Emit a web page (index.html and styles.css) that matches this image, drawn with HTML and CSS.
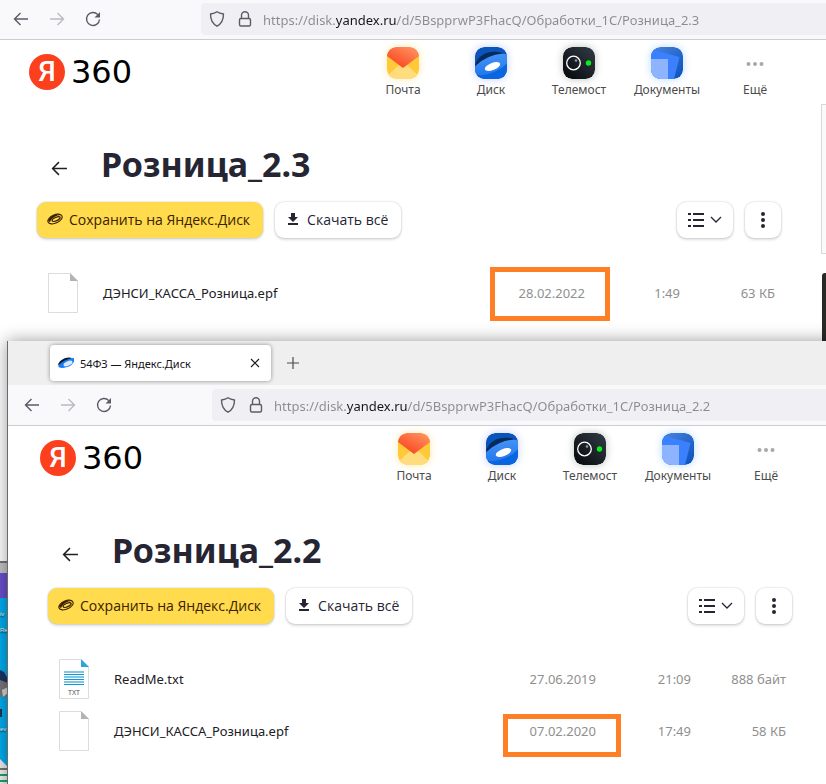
FILE: index.html
```html
<!DOCTYPE html>
<html lang="ru">
<head>
<meta charset="utf-8">
<meta name="viewport" content="width=device-width, initial-scale=1">
<title>Яндекс.Диск</title>
<link rel="stylesheet" href="styles.css">
</head>
<body>
<svg class="defs" aria-hidden="true">
  <defs>
    <linearGradient id="mail-flap" x1="1" y1="0" x2="0.2" y2="1"><stop offset="0" stop-color="#ff9a66"/><stop offset="1" stop-color="#fb3f1c"/></linearGradient>
    <linearGradient id="disk-body" x1="1" y1="0" x2="0" y2="1"><stop offset="0" stop-color="#4a97f8"/><stop offset="1" stop-color="#1c74ea"/></linearGradient>
    <linearGradient id="meet-bg" x1="1" y1="0" x2="0" y2="1"><stop offset="0" stop-color="#323c46"/><stop offset="1" stop-color="#05070a"/></linearGradient>
    <linearGradient id="docs-bg" x1="0" y1="0" x2="1" y2="1"><stop offset="0" stop-color="#4a86dc"/><stop offset="1" stop-color="#0a50bd"/></linearGradient>
    <clipPath id="tile"><rect width="32" height="32" rx="9"/></clipPath>
    <symbol id="i-back" viewBox="0 0 16 16"><path d="M15 8H1.500M7.500 2L1.500 8l6 6" fill="none" stroke="currentColor" stroke-width="1.400"/></symbol>
    <symbol id="i-forward" viewBox="0 0 16 16"><path d="M1 8h13.500M8.500 2l6 6-6 6" fill="none" stroke="currentColor" stroke-width="1.400"/></symbol>
    <symbol id="i-reload" viewBox="0 0 16 16"><path d="M12.800 3.600A6.500 6.500 0 1 0 14.500 8.500" fill="none" stroke="currentColor" stroke-width="1.400"/><path d="M15 1v5.500H9.500z" fill="currentColor"/></symbol>
    <symbol id="i-shield" viewBox="0 0 16 16"><path d="M8 .8C6.300 2 3.800 2.700 1.500 3c0 5 1.500 9.500 6.500 12.200C13 12.500 14.500 8 14.500 3 12.200 2.700 9.700 2 8 .8z" fill="none" stroke="currentColor" stroke-width="1.400" stroke-linejoin="round"/></symbol>
    <symbol id="i-lock" viewBox="0 0 16 16"><rect x="2.500" y="7.500" width="11" height="7.500" rx="1.500" fill="none" stroke="currentColor" stroke-width="1.400"/><path d="M4.500 7.500V4.300a3.500 3.500 0 0 1 7 0v3.200" fill="none" stroke="currentColor" stroke-width="1.400"/></symbol>
    <symbol id="i-mail" viewBox="0 0 32 32"><g clip-path="url(#tile)"><path fill="#ffc938" d="M0 0h32v32H0z"/><path fill="#ffdc7c" d="M0 32V29L12 18h8l12 11v3z"/><path fill="url(#mail-flap)" d="M0 0h32v9L16 21 0 9z"/></g></symbol>
    <symbol id="i-disk" viewBox="0 0 32 32"><g clip-path="url(#tile)"><path fill="#0a55ba" d="M0 0h32v32H0z"/><path fill="#042a5e" d="M0 18C3 8 14 2 28 6L12 16z"/><path fill="#0a66e0" d="M0 24L32 10v22H0z"/><ellipse cx="16.500" cy="17.500" rx="19" ry="8" transform="rotate(-24 16.500 17.500)" fill="url(#disk-body)"/><ellipse cx="17.500" cy="19.500" rx="8.200" ry="3.600" transform="rotate(-22 17.500 19.500)" fill="#fff"/></g></symbol>
    <symbol id="i-meet" viewBox="0 0 32 32"><rect width="32" height="32" rx="9" fill="url(#meet-bg)"/><circle cx="10.500" cy="16" r="6.800" fill="none" stroke="#fff" stroke-width="1.300"/><circle cx="13" cy="13.500" r="1.300" fill="#8c98a4"/><circle cx="25.500" cy="16" r="2.700" fill="#09f018"/></symbol>
    <symbol id="i-docs" viewBox="0 0 32 32"><g clip-path="url(#tile)"><path fill="url(#docs-bg)" d="M0 0h32v32H0z"/><path fill="#3b80ff" d="M0 2l28.500 8L23 32H0z"/><path fill="#8fb4ff" d="M0 12h17v20H0z"/></g></symbol>
    <symbol id="i-dots" viewBox="0 0 32 32"><g fill="#a8a8a8"><circle cx="9.500" cy="17" r="2"/><circle cx="16" cy="17" r="2"/><circle cx="22.500" cy="17" r="2"/></g></symbol>
    <symbol id="i-save" viewBox="0 0 16 16"><g fill="none" stroke="currentColor" transform="rotate(-24 8 8)"><ellipse cx="8" cy="8" rx="7.600" ry="4.200" stroke-width="1.100"/><ellipse cx="9" cy="8.500" rx="4.300" ry="1.700" stroke-width="1.300"/></g><path d="M1 10c2-5 8-8 13-6C9 4 5 7 3 11z" fill="currentColor"/></symbol>
    <symbol id="i-download" viewBox="0 0 12 12"><path d="M4 0h4v4h3L6 9 1 4h3zM1 10h10v2H1z" fill="currentColor"/></symbol>
    <symbol id="i-list" viewBox="0 0 16 16"><path d="M0 1h3v2H0zM5 1h11v2H5zM0 7h3v2H0zM5 7h11v2H5zM0 13h3v2H0zM5 13h11v2H5z" fill="currentColor"/></symbol>
    <symbol id="i-chevron" viewBox="0 0 12 12"><path d="M1 3l5 5 5-5" fill="none" stroke="currentColor" stroke-width="1.300"/></symbol>
    <symbol id="i-more" viewBox="0 0 16 16"><g fill="currentColor"><circle cx="8" cy="2" r="2"/><circle cx="8" cy="8" r="2"/><circle cx="8" cy="14" r="2"/></g></symbol>
    <symbol id="i-file" viewBox="0 0 30 40"><path d="M.5.5H22L29.500 8v31.500H.5z" fill="#fff" stroke="#dcdcdc"/><path d="M22 0l8 8h-8z" fill="#b3b3b3"/></symbol>
    <symbol id="i-text-file" viewBox="0 0 30 40"><path d="M.5.5H22L29.500 8v31.500H.5z" fill="#fff" stroke="#dcdcdc"/><path d="M22 0l8 8h-8z" fill="#2da5dc"/><path d="M5 12h20v2H5zM5 17h20v2H5zM5 22h20v2H5z" fill="#7cc8ec"/><path d="M5 15h20v1H5zM5 20h20v1H5zM5 25h20v1H5z" fill="#0f97d6"/></symbol>
    <symbol id="i-tab" viewBox="0 0 16 16"><path d="M0 10C1 5 9 1 14 3L5 9z" fill="#03162e"/><path d="M0 11C3 7 10 3 16 3c1 3-1 6-4 8-4 2-11 3-12 0z" fill="#1a7cf2"/><ellipse cx="10" cy="8.500" rx="4.800" ry="2.300" transform="rotate(-25 10 8.500)" fill="#d7e9ff"/></symbol>
    <symbol id="i-close" viewBox="0 0 10 10"><path d="M1 1l8 8M9 1L1 9" fill="none" stroke="currentColor" stroke-width="1.100"/></symbol>
    <symbol id="i-plus" viewBox="0 0 12 12"><path d="M6 0v12M0 6h12" fill="none" stroke="currentColor" stroke-width="1.200"/></symbol>
  </defs>
</svg>

<div class="desktop">
  <div class="desktop-edge" aria-hidden="true">
    <div class="edge-frame"></div>
    <div class="edge-banner"></div>
    <div class="edge-label">iv<br>Re</div>
    <svg class="edge-art" viewBox="0 0 8 124"><path d="M0 21l4 2 4 7v10H0z" fill="#1c3566"/><path d="M0 31l8 3v12l-5 3-3-2z" fill="#77777b"/><path d="M2 41l6-3v6l-5 4z" fill="#d5d5d5"/><path d="M0 60h2v8H0z" fill="#20364c"/><path d="M0 110l8 8v6H0z" fill="#eee"/></svg>
    <div class="edge-label edge-label-low">ev</div>
    <div class="edge-sheet"></div>
  </div>

  <section class="window window-back" aria-label="Розница_2.3">
    <div class="toolbar">
      <button class="tool" aria-label="Назад"><svg><use href="#i-back"/></svg></button>
      <button class="tool tool-off" aria-label="Вперёд"><svg><use href="#i-forward"/></svg></button>
      <button class="tool" aria-label="Обновить"><svg><use href="#i-reload"/></svg></button>
      <div class="address">
        <svg><use href="#i-shield"/></svg>
        <svg><use href="#i-lock"/></svg>
        <input class="url" type="text" aria-label="Адрес" value="https://disk.yandex.ru/d/5BspprwP3FhacQ/Обработки_1С/Розница_2.3">
      </div>
    </div>
    <div class="page">
      <header class="header">
        <a class="logo" href="#"><span class="logo-mark">Я</span><span class="logo-name">360</span></a>
        <nav class="services">
          <a href="#"><svg class="glow-mail"><use href="#i-mail"/></svg>Почта</a>
          <a href="#"><svg class="glow-disk"><use href="#i-disk"/></svg>Диск</a>
          <a href="#"><svg class="glow-meet"><use href="#i-meet"/></svg>Телемост</a>
          <a href="#"><svg class="glow-docs"><use href="#i-docs"/></svg>Документы</a>
          <a href="#"><svg><use href="#i-dots"/></svg>Ещё</a>
        </nav>
      </header>
      <main class="content">
        <div class="heading">
          <a class="up" href="#" aria-label="Наверх"><svg><use href="#i-back"/></svg></a>
          <h1>Розница_2.3</h1>
        </div>
        <div class="actions">
          <button class="button primary"><svg><use href="#i-save"/></svg>Сохранить на Яндекс.Диск</button>
          <button class="button download"><svg class="small"><use href="#i-download"/></svg>Скачать всё</button>
          <button class="button view" aria-label="Вид"><svg><use href="#i-list"/></svg><svg class="small"><use href="#i-chevron"/></svg></button>
          <button class="button more" aria-label="Ещё действия"><svg><use href="#i-more"/></svg></button>
        </div>
        <table class="files">
          <tr>
            <td class="icon"><svg><use href="#i-file"/></svg></td>
            <td class="name">ДЭНСИ_КАССА_Розница.epf</td>
            <td class="date">28.02.2022<span class="mark mark-large"></span></td>
            <td class="time">1:49</td>
            <td class="size">63 КБ</td>
          </tr>
        </table>
      </main>
      <aside class="side"><div class="side-card"></div><div class="side-photo"></div></aside>
    </div>
  </section>

  <section class="window window-front" aria-label="Розница_2.2">
    <div class="tabs">
      <div class="tab"><svg><use href="#i-tab"/></svg><span>54ФЗ — Яндекс.Диск</span><button class="close" aria-label="Закрыть вкладку"><svg><use href="#i-close"/></svg></button></div>
      <button class="new-tab" aria-label="Новая вкладка"><svg><use href="#i-plus"/></svg></button>
    </div>
    <div class="toolbar">
      <button class="tool" aria-label="Назад"><svg><use href="#i-back"/></svg></button>
      <button class="tool tool-off" aria-label="Вперёд"><svg><use href="#i-forward"/></svg></button>
      <button class="tool" aria-label="Обновить"><svg><use href="#i-reload"/></svg></button>
      <div class="address">
        <svg><use href="#i-shield"/></svg>
        <svg><use href="#i-lock"/></svg>
        <input class="url" type="text" aria-label="Адрес" value="https://disk.yandex.ru/d/5BspprwP3FhacQ/Обработки_1С/Розница_2.2">
      </div>
    </div>
    <div class="page">
      <header class="header">
        <a class="logo" href="#"><span class="logo-mark">Я</span><span class="logo-name">360</span></a>
        <nav class="services">
          <a href="#"><svg class="glow-mail"><use href="#i-mail"/></svg>Почта</a>
          <a href="#"><svg class="glow-disk"><use href="#i-disk"/></svg>Диск</a>
          <a href="#"><svg class="glow-meet"><use href="#i-meet"/></svg>Телемост</a>
          <a href="#"><svg class="glow-docs"><use href="#i-docs"/></svg>Документы</a>
          <a href="#"><svg><use href="#i-dots"/></svg>Ещё</a>
        </nav>
      </header>
      <main class="content">
        <div class="heading">
          <a class="up" href="#" aria-label="Наверх"><svg><use href="#i-back"/></svg></a>
          <h1>Розница_2.2</h1>
        </div>
        <div class="actions">
          <button class="button primary"><svg><use href="#i-save"/></svg>Сохранить на Яндекс.Диск</button>
          <button class="button download"><svg class="small"><use href="#i-download"/></svg>Скачать всё</button>
          <button class="button view" aria-label="Вид"><svg><use href="#i-list"/></svg><svg class="small"><use href="#i-chevron"/></svg></button>
          <button class="button more" aria-label="Ещё действия"><svg><use href="#i-more"/></svg></button>
        </div>
        <table class="files">
          <tr>
            <td class="icon"><svg><use href="#i-text-file"/></svg><span class="file-type">TXT</span></td>
            <td class="name">ReadMe.txt</td>
            <td class="date">27.06.2019</td>
            <td class="time">21:09</td>
            <td class="size">888 байт</td>
          </tr>
          <tr>
            <td class="icon"><svg><use href="#i-file"/></svg></td>
            <td class="name">ДЭНСИ_КАССА_Розница.epf</td>
            <td class="date">07.02.2020<span class="mark"></span></td>
            <td class="time">17:49</td>
            <td class="size">58 КБ</td>
          </tr>
        </table>
      </main>
    </div>
  </section>
</div>
</body>
</html>
```

FILE: styles.css
```css
* { box-sizing: border-box; }

body {
  margin: 0;
  font-family: "Noto Sans", "Open Sans", sans-serif;
  font-size: 13px;
  color: #21201f;
  background: #fff;
}

.defs { position: absolute; width: 0; height: 0; }
svg { display: block; flex: none; }
a { color: inherit; text-decoration: none; }
button { font: inherit; color: inherit; border: 0; padding: 0; background: none; }

.desktop {
  position: relative;
  min-height: 100vh;
  overflow: hidden;
}

/* Windows placed freely on the desktop */
.window {
  position: absolute;
  background: #fff;
}
.window-back {
  left: -3px;
  top: -1px;
  width: calc(100% + 11px);
  height: 562px;
}
.window-front {
  left: 7px;
  top: 341px;
  width: calc(100% + 12px);
  min-height: 100%;
  border-left: 1px solid #6b6b6b;
  box-shadow: 0 0 16px rgba(0, 0, 0, .4);
}

/* Browser chrome */
.tabs {
  display: flex;
  align-items: center;
  height: 44px;
  padding-left: 42px;
  gap: 16px;
  background: #efefef;
}
.tab {
  display: flex;
  align-items: center;
  gap: 6px;
  width: 221px;
  height: 36px;
  padding: 0 11px 0 8px;
  border-radius: 4px;
  background: #fff;
  box-shadow: 0 0 4px rgba(0, 0, 0, .4);
  font-size: 11px;
  color: #15141a;
}
.tab svg { width: 16px; height: 16px; }
.tab .close { margin-left: auto; }
.tab .close svg { width: 10px; height: 10px; }
.new-tab svg { width: 12px; height: 12px; color: #4a4a52; }

.toolbar {
  display: flex;
  align-items: center;
  height: 41px;
  padding-left: 16px;
  gap: 20px;
  background: #f9f9fb;
  border-bottom: 1px solid #ccccd0;
}
.tool { color: #5b5b66; }
.tool svg { width: 16px; height: 16px; }
.tool-off { color: #bbbbc0; }
.address {
  flex: 1;
  display: flex;
  align-items: center;
  gap: 12px;
  height: 32px;
  margin-left: 80px;
  padding-left: 8px;
  border-radius: 4px;
  background: #f0f0f4;
  color: #5b5b66;
}
.address svg { width: 16px; height: 16px; }
/* The domain part of the address is drawn darker than the rest */
.url {
  flex: 1;
  min-width: 0;
  margin-left: -2px;
  padding: 2px 0 0;
  border: 0;
  outline: 0;
  font: 13px/20px "Noto Sans", "Open Sans", sans-serif;
  color: transparent;
  background: linear-gradient(90deg, #8a8a94 73px, #15141a 73px 134px, #8a8a94 134px);
  background-clip: text;
  -webkit-background-clip: text;
}

/* Disk page */
.header {
  display: flex;
  justify-content: space-between;
  align-items: flex-start;
  padding: 7px 35px 0 32px;
}
.logo {
  display: flex;
  align-items: center;
  gap: 6px;
  margin-top: 7px;
  color: #000;
}
.logo-mark {
  width: 36px;
  height: 36px;
  border-radius: 50%;
  background: #fc3f1d;
  color: #fff;
  font: 500 28px/36px Roboto, sans-serif;
  text-align: center;
}
.logo-name { font: 32px/36px "DejaVu Sans", sans-serif; }
.services { display: flex; }
.services a {
  display: flex;
  flex-direction: column;
  align-items: center;
  width: 88px;
  line-height: 22px;
  font-size: 12px;
  color: #4c4b4b;
}
.services svg { width: 32px; height: 32px; border-radius: 9px; }
.glow-mail { box-shadow: 0 0 8px #ffe9b5; }
.glow-disk { box-shadow: 0 0 8px #c5cfff; }
.glow-meet { box-shadow: 0 0 8px #bcc4bc; }
.glow-docs { box-shadow: 0 0 8px #bcdcff; }

.content { padding: 39px 53px 0 40px; }
.heading {
  display: flex;
  align-items: center;
  gap: 33px;
  padding-left: 14px;
}
.up { margin-top: 8px; }
.up svg { width: 17px; height: 17px; }
h1 {
  margin: 0;
  font-size: 34px;
  line-height: 48px;
  font-weight: 700;
  color: #262533;
}
.actions { display: flex; gap: 12px; margin-top: 14px; }
.button {
  display: flex;
  align-items: center;
  justify-content: center;
  gap: 6px;
  height: 36px;
  padding: 0 13px 2px 10px;
  border-radius: 9px;
  background: #fff;
  box-shadow: 0 0 2px rgba(0, 0, 0, .24), 0 2px 3px rgba(0, 0, 0, .12);
  font-family: "Open Sans", "Noto Sans", sans-serif;
  font-size: 14px;
  font-weight: 500;
  color: #262533;
}
.button svg { width: 16px; height: 16px; }
.button svg.small { width: 12px; height: 12px; }
.primary { background: #ffdb4d; color: #3a2100; }
.download { gap: 8px; padding-left: 12px; }
.view { width: 56px; margin-left: auto; padding: 0; }
.more { width: 36px; padding: 0; }

.files {
  width: 100%;
  margin-top: 29px;
  border-collapse: collapse;
  table-layout: fixed;
  color: #8f8f8f;
}
.files td { position: relative; height: 52px; padding: 0; }
.files .icon { width: 66px; padding-left: 11px; }
.files .icon svg { width: 30px; height: 40px; }
.file-type {
  position: absolute;
  left: 11px;
  bottom: 7px;
  width: 30px;
  font-size: 7px;
  line-height: 10px;
  text-align: center;
  color: #555;
}
.files .name { color: #21201f; }
.files .date { width: 88px; text-align: right; }
.files .time { width: 95px; text-align: right; }
.files .size { width: 101px; padding-right: 6px; text-align: right; }
.mark {
  position: absolute;
  inset: 9px -25px 0 -5px;
  border: 5px solid #ff7f27;
}
.mark-large { inset: 0 -25px -2px -7px; }

/* Right column peeking in at the edge */
.side {
  position: absolute;
  left: calc(100% - 13px);
  top: 105px;
  width: 60px;
}
.side-card { height: 150px; border: 1px solid #d8d8d8; background: #fafafa; }
.side-photo { height: 80px; margin: 19px 0 0 1px; background: #292a26; border-radius: 3px; }

/* Strip of desktop visible beside the front window */
.desktop-edge {
  position: absolute;
  left: 0;
  top: 561px;
  width: 8px;
  height: 223px;
  overflow: hidden;
  background: #00adef;
}
.edge-frame { height: 12px; background: #c4c4c4; border-top: 2px solid #777; }
.edge-banner { height: 25px; background: #6a4fcf; }
.edge-label {
  margin-top: 8px;
  font: 6px/16px "Liberation Sans", sans-serif;
  color: #fff;
  text-shadow: 0 1px 2px #000;
}
.edge-art { position: absolute; left: 0; top: 88px; width: 8px; height: 124px; }
.edge-label-low { position: absolute; top: 152px; }
.edge-sheet {
  position: absolute;
  left: 0;
  right: 0;
  bottom: 0;
  height: 16px;
  border-top: 2px solid #777;
  background: repeating-linear-gradient(#f3f3f3 0 4px, #21a366 4px 6px);
}
```
